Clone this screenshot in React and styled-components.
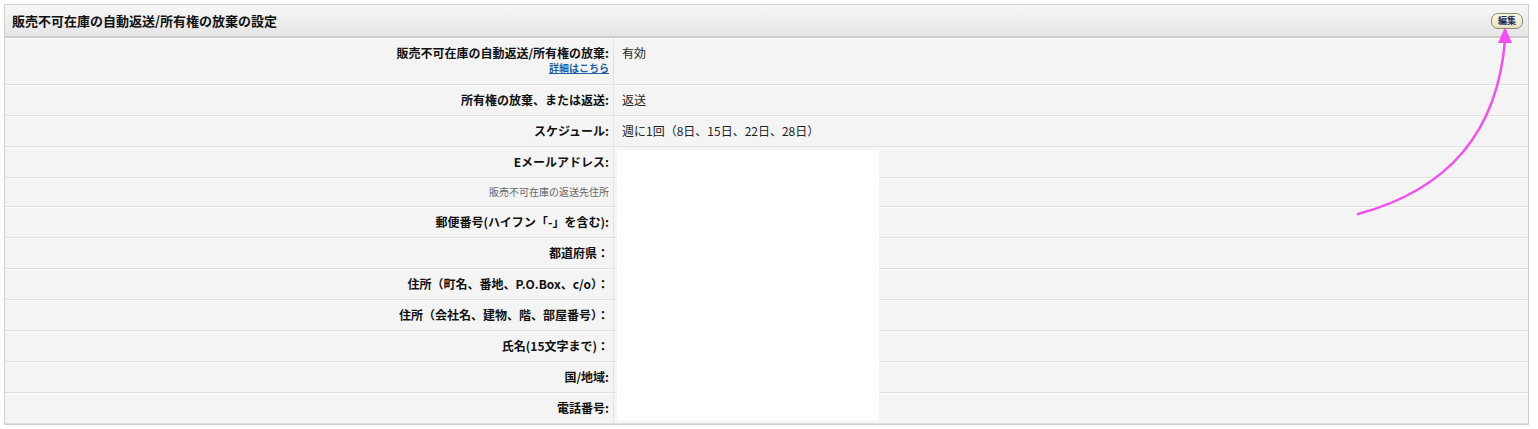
import React from 'react';
import styled, { createGlobalStyle } from 'styled-components';

const GlobalStyle = createGlobalStyle`
    body {
        margin: 0;
        background: #ffffff;
        font-family: "Noto Sans CJK JP", "Liberation Sans", sans-serif;
        color: #111;
    }
`

const Page = styled.div`
    position: relative;
    padding: 4px 9px 4px 4px;
`

const Panel = styled.section`
    position: relative;
    border: 1px solid #cfcfcf;
    background: #f4f4f4;
`

const Header = styled.div`
    height: 31px;
    display: flex;
    align-items: center;
    justify-content: space-between;
    padding: 0 5px 0 7px;
    background: linear-gradient(#f7f7f7, #e5e5e5);
    border-bottom: 2px solid #cdcdcd;
`

const Title = styled.h2`
    margin: 0;
    font-size: 13px;
    font-weight: 700;
    color: #111;
`

const EditButton = styled.button`
    height: 16px;
    padding: 0 6px;
    border: 1px solid #8d8a6a;
    border-radius: 7px;
    background: linear-gradient(#fbf9e8, #e7e2bf);
    color: #1b2a5c;
    font-family: inherit;
    font-size: 9px;
    font-weight: 700;
    line-height: 13px;
    cursor: pointer;
`

const Row = styled.div`
    display: grid;
    grid-template-columns: 609px 1fr;
    border-bottom: 1px solid #e0e0e0;
    box-shadow: inset 0 1px 0 #fbfbfb;

    &:last-child {
        border-bottom: none;
    }
`

const Label = styled.div`
    text-align: right;
    padding: 7px 4px 7px 0;
    font-size: ${props => props.$sub ? '10px' : '12px'};
    font-weight: ${props => props.$sub ? 400 : 700};
    color: ${props => props.$sub ? '#666' : '#111'};
    line-height: ${props => props.$sub ? '14px' : '16px'};
    border-right: 1px solid #e2e2e2;
`

const Value = styled.div`
    padding: 7px 8px;
    font-size: 12px;
    line-height: 16px;
    color: #222;
`

const MoreLink = styled.a`
    display: block;
    margin: 0 0 2px;
    font-size: 10px;
    line-height: 14px;
    font-weight: 700;
    color: #1f5fa8;
    text-decoration: underline;
`

const Redaction = styled.div`
    position: absolute;
    left: 612px;
    top: 145px;
    width: 262px;
    height: 271px;
    background: #ffffff;
`

const Arrow = styled.svg`
    position: absolute;
    left: 0;
    top: 0;
    pointer-events: none;
`

const rows = [
    { label: '所有権の放棄、または返送:', value: '返送' },
    { label: 'スケジュール:', value: '週に1回（8日、15日、22日、28日）' },
    { label: 'Eメールアドレス:', value: '' },
    { label: '販売不可在庫の返送先住所', value: '', sub: true },
    { label: '郵便番号(ハイフン「-」を含む):', value: '' },
    { label: '都道府県：', value: '' },
    { label: '住所（町名、番地、P.O.Box、c/o）：', value: '' },
    { label: '住所（会社名、建物、階、部屋番号）：', value: '' },
    { label: '氏名(15文字まで)：', value: '' },
    { label: '国/地域:', value: '' },
    { label: '電話番号:', value: '' },
]

function App() {
    return (
        <Page>
            <GlobalStyle />
            <Panel>
                <Header>
                    <Title>販売不可在庫の自動返送/所有権の放棄の設定</Title>
                    <EditButton>編集</EditButton>
                </Header>
                <Row>
                    <Label>
                        販売不可在庫の自動返送/所有権の放棄:
                        <MoreLink href="#">詳細はこちら</MoreLink>
                    </Label>
                    <Value>有効</Value>
                </Row>
                {rows.map(r => (
                    <Row key={r.label}>
                        <Label $sub={r.sub}>{r.label}</Label>
                        <Value>{r.value}</Value>
                    </Row>
                ))}
                <Redaction />
            </Panel>
            <Arrow width="1538" height="429" viewBox="0 0 1538 429">
                <path d="M1358 214 C1440 192 1497 140 1505 40" fill="none" stroke="#f24ff0" strokeWidth="2.5" strokeLinecap="round" />
                <polygon points="1505,27 1498,43 1512,43" fill="#f24ff0" />
            </Arrow>
        </Page>
    );
}

export default App;
